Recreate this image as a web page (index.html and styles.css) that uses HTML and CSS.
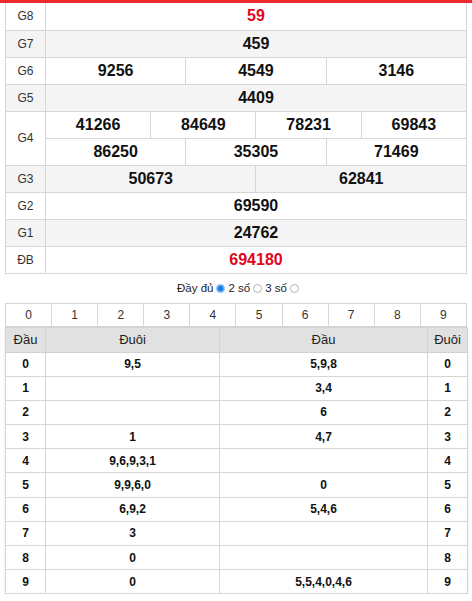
FILE: index.html
```html
<!DOCTYPE html>
<html lang="vi">
<head>
<meta charset="utf-8">
<title>Kết quả xổ số</title>
<link rel="stylesheet" href="styles.css">
</head>
<body>
<div class="topbar"></div>
<main class="wrap">
  <table class="kq">
    <colgroup><col class="c-label"><col span="12"></colgroup>
    <tr><th>G8</th><td colspan="12" class="red">59</td></tr>
    <tr class="alt"><th>G7</th><td colspan="12">459</td></tr>
    <tr><th>G6</th><td colspan="4">9256</td><td colspan="4">4549</td><td colspan="4">3146</td></tr>
    <tr class="alt"><th>G5</th><td colspan="12">4409</td></tr>
    <tr><th rowspan="2">G4</th><td colspan="3">41266</td><td colspan="3">84649</td><td colspan="3">78231</td><td colspan="3">69843</td></tr>
    <tr><td colspan="4">86250</td><td colspan="4">35305</td><td colspan="4">71469</td></tr>
    <tr class="alt"><th>G3</th><td colspan="6">50673</td><td colspan="6">62841</td></tr>
    <tr><th>G2</th><td colspan="12">69590</td></tr>
    <tr class="alt"><th>G1</th><td colspan="12">24762</td></tr>
    <tr><th>ĐB</th><td colspan="12" class="red">694180</td></tr>
  </table>

  <div class="opts">
    <label class="opt">Đầy đủ<span class="radio on"></span></label>
    <label class="opt">2 số<span class="radio"></span></label>
    <label class="opt">3 số<span class="radio"></span></label>
  </div>

  <table class="digits">
    <tr><td>0</td><td>1</td><td>2</td><td>3</td><td>4</td><td>5</td><td>6</td><td>7</td><td>8</td><td>9</td></tr>
  </table>

  <table class="loto">
    <colgroup><col class="c-d"><col class="c-t1"><col class="c-t2"><col class="c-d"></colgroup>
    <thead>
      <tr><th>Đầu</th><th>Đuôi</th><th>Đầu</th><th>Đuôi</th></tr>
    </thead>
    <tbody>
      <tr><td>0</td><td>9,5</td><td>5,9,8</td><td>0</td></tr>
      <tr><td>1</td><td></td><td>3,4</td><td>1</td></tr>
      <tr><td>2</td><td></td><td>6</td><td>2</td></tr>
      <tr><td>3</td><td>1</td><td>4,7</td><td>3</td></tr>
      <tr><td>4</td><td>9,6,9,3,1</td><td></td><td>4</td></tr>
      <tr><td>5</td><td>9,9,6,0</td><td>0</td><td>5</td></tr>
      <tr><td>6</td><td>6,9,2</td><td>5,4,6</td><td>6</td></tr>
      <tr><td>7</td><td>3</td><td></td><td>7</td></tr>
      <tr><td>8</td><td>0</td><td></td><td>8</td></tr>
      <tr><td>9</td><td>0</td><td>5,5,4,0,4,6</td><td>9</td></tr>
    </tbody>
  </table>
</main>
</body>
</html>
```

FILE: styles.css
```css
* { box-sizing: border-box; }
html, body { margin: 0; padding: 0; background: #fff; }
body {
  font-family: "Liberation Sans", Arial, sans-serif;
  color: #222;
  width: 472px;
}
.topbar { height: 3px; background: #ec2a2d; }
.wrap { padding: 0 5px; }

table { border-collapse: collapse; width: 462px; table-layout: fixed; }

.kq td, .kq th { border: 1px solid #d6d6d6; padding: 0; text-align: center; height: 27px; }
.kq tr:first-child td, .kq tr:first-child th { border-top: 0; height: 27px; }
.kq .c-label { width: 40px; }
.kq th { font-weight: normal; font-size: 12px; color: #333; }
.kq td { font-weight: bold; font-size: 16px; color: #111; }
.kq td.red { color: #e3061b; }
.kq tr.alt td, .kq tr.alt th { background: #f4f4f4; }

.opts {
  height: 29px;
  display: flex;
  justify-content: center;
  align-items: center;
  gap: 3px;
  font-size: 11.5px;
  color: #222;
  padding-left: 4px;
}
.opt { display: inline-flex; align-items: center; gap: 3px; }
.radio {
  display: inline-block;
  width: 9px; height: 9px;
  border-radius: 50%;
  border: 1px solid #b5b5b5;
  background: #fff;
}
.radio.on {
  border-color: #74b0f2;
  background: radial-gradient(circle, #1a7ee8 0 2.6px, #8fc2f7 3.2px);
}

.digits td {
  border: 1px solid #d6d6d6;
  height: 23px;
  padding: 0;
  text-align: center;
  font-size: 12px;
  color: #333;
}

.loto { box-shadow: 0 1px 2px rgba(0,0,0,0.12); }
.loto .c-d { width: 40px; }
.loto .c-t1 { width: 174px; }
.loto .c-t2 { width: 208px; }
.loto th {
  background: #e1e1e1;
  font-weight: normal;
  font-size: 13px;
  color: #222;
  height: 25px;
  border: 1px solid #d2d2d2;
  padding: 0;
}
.loto td {
  border: 1px solid #d6d6d6;
  height: 24.2px;
  padding: 0;
  text-align: center;
  font-weight: bold;
  font-size: 12px;
  color: #111;
}
```
